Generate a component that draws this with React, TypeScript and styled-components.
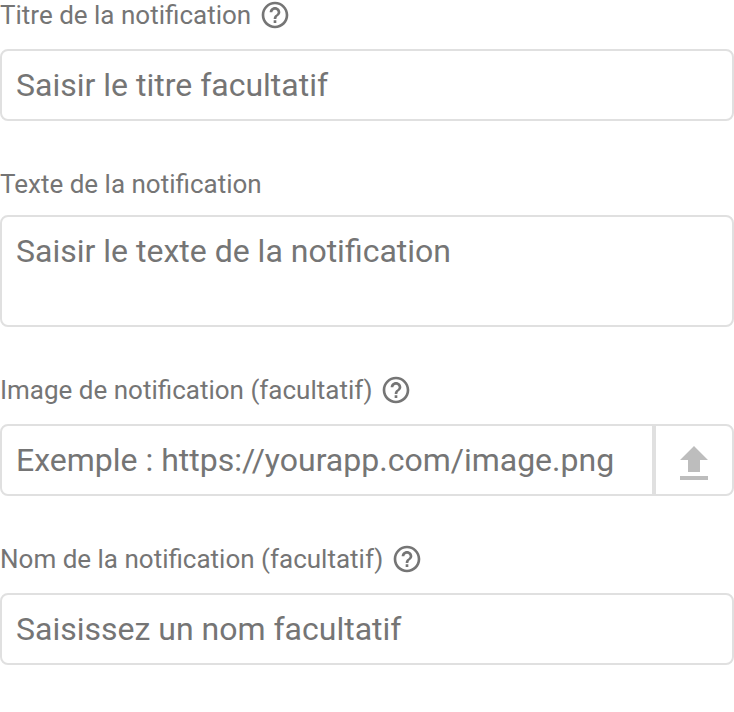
import React from "react";
import styled, { createGlobalStyle } from "styled-components";

const GlobalStyle = createGlobalStyle`
  *, *::before, *::after { box-sizing: border-box; }
  body {
    margin: 0;
    background: #fff;
    font-family: Roboto, sans-serif;
    overflow: hidden;
  }
`;

const Form = styled.form`
  display: flex;
  flex-direction: column;
  width: 734px;
  height: 712px;
  overflow: hidden;
`;

const Field = styled.div<{ $height: number }>`
  display: flex;
  flex-direction: column;
  flex: none;
  height: ${(p) => p.$height}px;
  justify-content: flex-end;
`;

const LabelRow = styled.div<{ $gap: number }>`
  display: flex;
  align-items: center;
  gap: 7.6px;
  height: 32px;
  margin-bottom: ${(p) => p.$gap}px;
`;

const Label = styled.label`
  font-size: 26px;
  line-height: 32px;
  color: #757575;
  white-space: nowrap;
`;

const HelpSvg = styled.svg`
  flex: none;
  width: 32px;
  height: 32px;
  fill: #757575;
`;

const Frame = styled.div<{ $height?: number }>`
  display: flex;
  flex: none;
  height: ${(p) => p.$height ?? 72}px;
  border: 2px solid #e0e0e0;
  border-radius: 8px;
  background: #fff;
  overflow: hidden;
`;

const Input = styled.input`
  flex: 1;
  min-width: 0;
  padding: 0 14px;
  border: 0;
  outline: 0;
  background: transparent;
  font: 32px/40px Roboto, sans-serif;
  color: #212121;
  &::placeholder { color: #757575; opacity: 1; }
`;

const TextArea = styled.textarea`
  flex: 1;
  padding: 14px;
  border: 0;
  outline: 0;
  resize: none;
  overflow: hidden;
  background: transparent;
  font: 32px/40px Roboto, sans-serif;
  color: #212121;
  &::placeholder { color: #757575; opacity: 1; }
`;

const UploadButton = styled.button`
  display: flex;
  justify-content: center;
  flex: none;
  width: 80px;
  padding: 14px 0 0;
  border: 0;
  border-left: 4px solid #e0e0e0;
  background: transparent;
`;

const UploadSvg = styled.svg`
  flex: none;
  width: 48px;
  height: 48px;
  fill: #bdbdbd;
`;

const HelpIcon = () => (
  <HelpSvg viewBox="0 0 24 24" aria-hidden="true">
    <path d="M11 18h2v-2h-2v2zm1-16C6.48 2 2 6.48 2 12s4.48 10 10 10 10-4.48 10-10S17.52 2 12 2zm0 18c-4.41 0-8-3.59-8-8s3.59-8 8-8 8 3.59 8 8-3.59 8-8 8zm0-14c-2.21 0-4 1.79-4 4h2c0-1.1.9-2 2-2s2 .9 2 2c0 2-3 1.75-3 5h2c0-2.25 3-2.5 3-5 0-2.21-1.79-4-4-4z" />
  </HelpSvg>
);

export default function App() {
  return (
    <>
      <GlobalStyle />
      <Form>
        <Field $height={121}>
          <LabelRow $gap={18}>
            <Label htmlFor="title">Titre de la notification</Label>
            <HelpIcon />
          </LabelRow>
          <Frame>
            <Input id="title" placeholder="Saisir le titre facultatif" />
          </Frame>
        </Field>
        <Field $height={206}>
          <LabelRow $gap={15}>
            <Label htmlFor="text">Texte de la notification</Label>
          </LabelRow>
          <Frame $height={112}>
            <TextArea id="text" placeholder="Saisir le texte de la notification" />
          </Frame>
        </Field>
        <Field $height={169}>
          <LabelRow $gap={18}>
            <Label htmlFor="image">Image de notification (facultatif)</Label>
            <HelpIcon />
          </LabelRow>
          <Frame>
            <Input id="image" placeholder="Exemple : https://yourapp.com/image.png" />
            <UploadButton type="button" aria-label="Importer une image">
              <UploadSvg viewBox="0 0 24 24" aria-hidden="true">
                <path d="M9 16h6v-6h4l-7-7-7 7h4zm-4 2h14v2H5z" />
              </UploadSvg>
            </UploadButton>
          </Frame>
        </Field>
        <Field $height={169}>
          <LabelRow $gap={18}>
            <Label htmlFor="name">Nom de la notification (facultatif)</Label>
            <HelpIcon />
          </LabelRow>
          <Frame>
            <Input id="name" placeholder="Saisissez un nom facultatif" />
          </Frame>
        </Field>
      </Form>
    </>
  );
}
